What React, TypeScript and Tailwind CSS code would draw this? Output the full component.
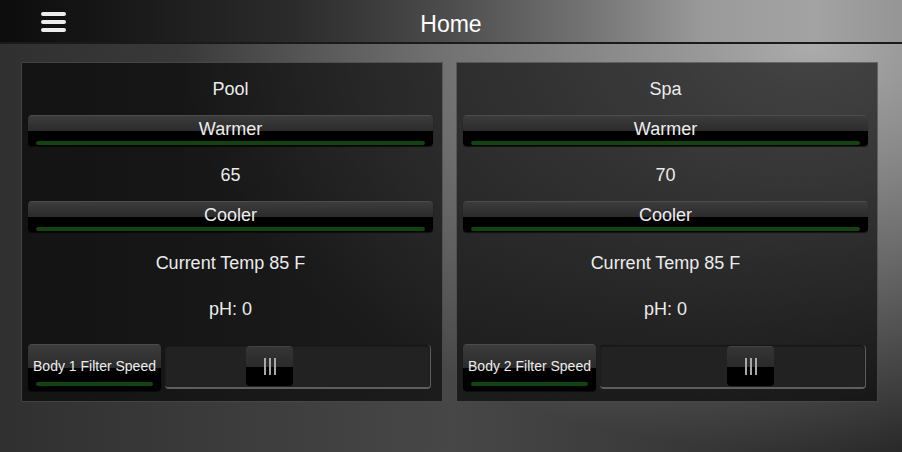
import type { ReactNode } from 'react';

const FONT = "font-['Liberation_Sans',Arial,sans-serif]";

function Hamburger() {
  return (
    <div className="flex flex-col gap-[4px] w-[25px] mt-[2px]">
      <span className="block h-[4px] rounded-full bg-[#ececec]" />
      <span className="block h-[4px] rounded-full bg-[#ececec]" />
      <span className="block h-[4px] rounded-full bg-[#ececec]" />
    </div>
  );
}

// Glossy two-tone button with a green indicator strip at the bottom
function GlossButton({
  label, className = '', textSize = 'text-[18px]', barBottom = 'bottom-[1px]',
}: { label: string; className?: string; textSize?: string; barBottom?: string }) {
  return (
    <div className={`relative rounded-[4px] overflow-hidden shadow-[0_1px_1px_rgba(0,0,0,0.6)] ${className}`}>
      <div className="absolute inset-0 flex flex-col">
        <div className="flex-1 bg-gradient-to-b from-[#3c3c3c] to-[#2b2b2b] border-t border-[#4c4c4c]" />
        <div className="flex-1 bg-black" />
      </div>
      <div className={`absolute left-[8px] right-[8px] ${barBottom} h-[4px] rounded-full bg-[#0f460f]`} />
      <div className={`relative h-full flex items-center justify-center pb-[2px] text-[#ededed] ${textSize}`}>
        {label}
      </div>
    </div>
  );
}

function Slider({ offset }: { offset: number }) {
  return (
    <div className="flex-1 h-[44px] mt-[1px] rounded-[4px] bg-[#222] border-b-2 border-r border-[#5e5e5e] shadow-[inset_0_1px_2px_rgba(0,0,0,0.5)] flex items-center">
      <div className="relative w-[47px] h-[40px] rounded-[4px] overflow-hidden flex items-center justify-center" style={{ marginLeft: offset }}>
        <div className="absolute inset-0 flex flex-col">
          <div className="flex-1 bg-gradient-to-b from-[#353535] to-[#2a2a2a] border-t border-[#444]" />
          <div className="flex-1 bg-black" />
        </div>
        <div className="relative flex gap-[3px]">
          <span className="block w-[2px] h-[17px] bg-[#a8a8a8]" />
          <span className="block w-[2px] h-[17px] bg-[#a8a8a8]" />
          <span className="block w-[2px] h-[17px] bg-[#a8a8a8]" />
        </div>
      </div>
    </div>
  );
}

function Row({ h, children }: { h: string; children: ReactNode }) {
  return <div className={`${h} flex items-center justify-center text-[18px] text-[#ececec]`}>{children}</div>;
}

function BodyCard({ name, setpoint, body, thumb }: { name: string; setpoint: number; body: number; thumb: number }) {
  return (
    <section className="w-[422px] h-[340px] border border-white/20 bg-black/60 pl-[6px] pr-[9px] flex flex-col">
      <Row h="h-[52px]">{name}</Row>
      <GlossButton label="Warmer" className="h-[31px]" />
      <Row h="h-[55px] pt-[3px]">{setpoint}</Row>
      <GlossButton label="Cooler" className="h-[31px]" />
      <Row h="h-[60px] pt-[2px]">Current Temp 85 F</Row>
      <Row h="h-[32px] pt-[2px]">pH: 0</Row>
      <div className="h-[20px]" />
      <div className="h-[47px] flex gap-[4px] pr-[2px]">
        <GlossButton
          label={`Body ${body} Filter Speed`}
          className="w-[133px] h-[47px]"
          textSize="text-[14px]"
          barBottom="bottom-[5px]"
        />
        <Slider offset={thumb} />
      </div>
    </section>
  );
}

export default function App() {
  return (
    <div className={`w-[902px] h-[452px] overflow-hidden flex flex-col ${FONT}`}>
      {/* Top bar */}
      <header className="h-[44px] shrink-0 border-b-2 border-[#1a1a1a] bg-[linear-gradient(to_right,#0c0c0c_0%,#1c1c1c_17%,#2c2c2c_33%,#4d4d4d_50%,#767676_66%,#9a9a9a_78%,#a3a3a3_90%,#959595_100%)] flex items-center px-[41px]">
        <Hamburger />
        <h1 className="flex-1 text-center text-[23px] text-white pr-[25px] pt-[6px]">Home</h1>
      </header>

      {/* Main area */}
      <main className="flex-1 bg-[radial-gradient(ellipse_70%_100%_at_90%_0%,rgba(172,172,172,1)_0%,rgba(160,160,160,0.75)_35%,rgba(80,80,80,0)_100%),linear-gradient(to_right,#303030,#474747_50%,#2a2a2a)] pt-[18px] pl-[21px] flex gap-[13px]">
        <BodyCard name="Pool" setpoint={65} body={1} thumb={81} />
        <BodyCard name="Spa" setpoint={70} body={2} thumb={127} />
      </main>
    </div>
  );
}
